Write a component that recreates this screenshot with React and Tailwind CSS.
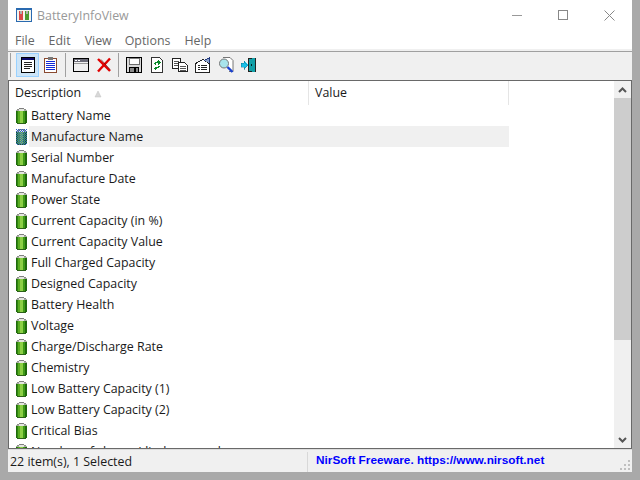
import React from "react";

const font = { fontFamily: "'Open Sans', 'Noto Sans', sans-serif" };

const rows = [
  "Battery Name",
  "Manufacture Name",
  "Serial Number",
  "Manufacture Date",
  "Power State",
  "Current Capacity (in %)",
  "Current Capacity Value",
  "Full Charged Capacity",
  "Designed Capacity",
  "Battery Health",
  "Voltage",
  "Charge/Discharge Rate",
  "Chemistry",
  "Low Battery Capacity (1)",
  "Low Battery Capacity (2)",
  "Critical Bias",
  "Number of charge/discharge cycles",
];

function Battery({ selected }) {
  return (
    <svg width="11" height="16" viewBox="0 0 11 16" shapeRendering="crispEdges" className="shrink-0">
      <defs>
        <pattern id="dither" width="2" height="2" patternUnits="userSpaceOnUse">
          <rect x="0" y="0" width="1" height="1" fill="#2f62c8" />
          <rect x="1" y="1" width="1" height="1" fill="#2f62c8" />
        </pattern>
      </defs>
      <rect x="3" y="0" width="5" height="1" fill="#7f7f7f" />
      <rect x="1" y="1" width="9" height="1" fill="#8d8f8a" />
      <rect x="0" y="2" width="11" height="1" fill="#a9aca5" />
      <rect x="3" y="1" width="5" height="2" fill="#e4e6e0" />
      <rect x="0" y="3" width="11" height="12" fill="#1f6a0c" />
      <rect x="1" y="15" width="9" height="1" fill="#2c6118" />
      <rect x="1" y="3" width="1" height="12" fill="#2f8512" />
      <rect x="2" y="3" width="2" height="12" fill="#5aad22" />
      <rect x="4" y="3" width="3" height="12" fill="#8ccf45" />
      <rect x="7" y="3" width="2" height="12" fill="#3f9a18" />
      {selected && <rect x="0" y="0" width="11" height="16" fill="url(#dither)" />}
    </svg>
  );
}

function Icon({ children }) {
  return (
    <svg width="16" height="16" viewBox="0 0 16 16" shapeRendering="crispEdges">
      {children}
    </svg>
  );
}

const icons = {
  report: (
    <Icon>
      <rect x="1.5" y="0.5" width="13" height="15" fill="#fff" stroke="#000" />
      <rect x="2" y="1" width="12" height="2" fill="#0a0a6a" />
      <path d="M4 5.5h8M4 7.5h8M4 9.5h8M4 11.5h6" stroke="#222" />
    </Icon>
  ),
  clipboard: (
    <Icon>
      <rect x="1.5" y="1.5" width="12" height="14" fill="#fff" stroke="#8a4a30" />
      <rect x="5" y="0" width="5" height="3" fill="#777" />
      <path d="M3 4.5h9M3 6.5h9M3 8.5h9M3 10.5h9M3 12.5h9" stroke="#1428d8" />
    </Icon>
  ),
  win: (
    <Icon>
      <rect x="0.5" y="1.5" width="15" height="13" fill="#f0f0f0" stroke="#000" />
      <rect x="1" y="2" width="14" height="3" fill="#6c6c78" />
      <path d="M2 3.5h2M5 3.5h2" stroke="#fff" />
      <path d="M1 6.5h14" stroke="#999" />
    </Icon>
  ),
  del: (
    <svg width="16" height="16" viewBox="0 0 16 16">
      <path d="M2 2l12 12" stroke="#e00000" strokeWidth="2.4" />
      <path d="M14 1.5L2 14.5" stroke="#e00000" strokeWidth="2.4" />
      <path d="M5 2.5l9 10" stroke="#700000" strokeWidth="0.7" />
    </svg>
  ),
  save: (
    <Icon>
      <rect x="0.5" y="0.5" width="15" height="15" fill="#d8d8d8" stroke="#000" />
      <rect x="3" y="1" width="10" height="6" fill="#fff" stroke="#000" strokeWidth="0.5" />
      <rect x="3.5" y="10.5" width="9" height="5" fill="#8a8a8a" stroke="#000" />
      <rect x="8" y="11" width="2" height="4" fill="#000" />
    </Icon>
  ),
  refresh: (
    <Icon>
      <path d="M2.5 0.5h8l3 3v12h-11z" fill="#fff" stroke="#333" />
      <path d="M5 7c0-2 2-3 4-2.500V3l2.500 2.500L9 8V6.500C7.500 6 6.500 6.500 6.500 8z" fill="#0a8a2a" />
      <path d="M11 9c0 2-2 3-4 2.500V14l-2.500-2.500L7 9v1c1.500.5 2.500 0 2.500-1.500z" fill="#0a8a2a" />
    </Icon>
  ),
  copy: (
    <Icon>
      <rect x="0.5" y="1.5" width="8" height="10" fill="#fff" stroke="#222" />
      <path d="M2 4.500h5M2 6.500h5M2 8.500h5" stroke="#555" />
      <path d="M6.500 5.500h6l3 3v6h-9z" fill="#fff" stroke="#222" />
      <path d="M8 9.500h6M8 11.500h6M8 13.500h6" stroke="#555" />
    </Icon>
  ),
  props: (
    <Icon>
      <path d="M0.500 6.500L8 2.500l6 4v9H0.500z" fill="#fff" stroke="#222" />
      <path d="M3 8.500h2M6 8.500h6M3 10.500h2M6 10.500h6M3 12.500h2M6 12.500h6" stroke="#222" />
      <path d="M9 3.500L14.500 1v5" fill="#8aa0c8" stroke="#223a80" />
    </Icon>
  ),
  find: (
    <svg width="16" height="16" viewBox="0 0 16 16">
      <path d="M5 0.500h7l3 3v11H11" fill="#fff" stroke="#555" strokeWidth="0.8" />
      <circle cx="6" cy="6.500" r="4.500" fill="#a8e4ec" stroke="#777" strokeWidth="1" />
      <path d="M9.500 10l5 5" stroke="#1840d0" strokeWidth="2.400" />
    </svg>
  ),
  exit: (
    <Icon>
      <path d="M7 1h8v14H7z" fill="#222" />
      <path d="M8 2l6-1v14l-6-1z" fill="#12a0a8" />
      <rect x="9.500" y="7" width="1" height="2" fill="#022" />
      <path d="M0 6h3V3.500L7 8l-4 4.500V10H0z" fill="#18c0e8" stroke="#0a5a70" strokeWidth="0.300" />
    </Icon>
  ),
};

function ToolBtn({ icon, active }) {
  return (
    <div
      className={`w-[23px] h-[24px] flex items-center justify-center border ${
        active ? "bg-[#cce4f7] border-[#99d1ff]" : "border-transparent"
      }`}
    >
      {icons[icon]}
    </div>
  );
}

function Sep() {
  return (
    <div className="w-[7px] h-[24px] flex justify-center pr-[1px]">
      <div className="w-px h-full bg-[#a0a0a0]" />
    </div>
  );
}

export default function App() {
  return (
    <div className="w-[640px] h-[480px] bg-[#a9a9a9] px-2 pb-2 overflow-hidden" style={font}>
      <div className="h-[472px] flex flex-col bg-[#f0f0f0] text-[12.4px] leading-none">
        {/* title bar */}
        <div className="h-[30px] bg-white flex items-center pl-2 shrink-0">
          <svg width="16" height="16" viewBox="0 0 16 16" shapeRendering="crispEdges">
            <rect x="0" y="1" width="16" height="14" fill="#2a6ab0" />
            <rect x="1" y="3" width="14" height="11" fill="#f4f4ee" />
            <rect x="3" y="4" width="4" height="9" fill="#d84848" />
            <rect x="4" y="4" width="2" height="3" fill="#b0b0b0" />
            <rect x="9" y="4" width="4" height="9" fill="#4a9a30" />
            <rect x="10" y="4" width="2" height="3" fill="#b0b0b0" />
          </svg>
          <span className="ml-[5px] mt-[2px] text-[#999999]">BatteryInfoView</span>
          <div className="ml-auto flex items-center h-full">
            <div className="w-[46px] flex justify-center">
              <div className="w-[10px] h-px bg-[#999999]" />
            </div>
            <div className="w-[46px] flex justify-center">
              <div className="w-[10px] h-[10px] border border-[#888888]" />
            </div>
            <div className="w-[46px] flex justify-center">
              <svg width="11" height="11" viewBox="0 0 11 11">
                <path d="M0.500 0.500l10 10M10.500 0.500l-10 10" stroke="#888888" fill="none" />
              </svg>
            </div>
          </div>
        </div>
        {/* menu */}
        <div className="h-[19px] bg-white flex items-center pl-[7px] pt-[3px] text-[#666666] shrink-0">
          <span>File</span>
          <span className="ml-[14px]">Edit</span>
          <span className="ml-[14px]">View</span>
          <span className="ml-[13px]">Options</span>
          <span className="ml-[14px]">Help</span>
        </div>
        <div className="h-[3px] border-b border-[#a0a0a0] bg-[#f0f0f0] shrink-0" />
        {/* toolbar */}
        <div className="h-[28px] flex items-center shrink-0 pb-[2px]">
          <div className="w-[8px] h-[24px] flex justify-end pr-[5px]">
            <div className="w-px h-full bg-[#a0a0a0]" />
          </div>
          <ToolBtn icon="report" active />
          <ToolBtn icon="clipboard" />
          <Sep />
          <ToolBtn icon="win" />
          <ToolBtn icon="del" />
          <Sep />
          <ToolBtn icon="save" />
          <ToolBtn icon="refresh" />
          <ToolBtn icon="copy" />
          <ToolBtn icon="props" />
          <ToolBtn icon="find" />
          <ToolBtn icon="exit" />
        </div>
        {/* list */}
        <div className="h-[369px] flex bg-white border border-[#696969] shrink-0 overflow-hidden">
          <div className="flex-1 min-w-0 overflow-hidden text-[#1a1a1a]">
            <div className="h-[24px] flex items-center">
              <div className="w-[300px] h-full flex items-center pl-[6px] border-r border-[#e5e5e5]">
                <span>Description</span>
                <svg width="8" height="8" viewBox="0 0 8 8" className="ml-[13px] mt-[1px]">
                  <path d="M4 1L7 7H1z" fill="#d8d8d8" stroke="#c0c0c0" strokeWidth="0.500" />
                </svg>
              </div>
              <div className="w-[200px] h-full flex items-center pl-[6px] border-r border-[#e5e5e5]">
                Value
              </div>
            </div>
            {rows.map((r, i) => (
              <div key={r} className="h-[21px] flex items-center pl-[7px]">
                <Battery selected={i === 1} />
                <div
                  className={`w-[480px] h-full flex items-center pl-[2px] pt-[2px] ml-[2px] ${
                    i === 1 ? "bg-[#f0f0f0]" : ""
                  }`}
                >
                  <span>{r}</span>
                </div>
              </div>
            ))}
          </div>
          {/* scrollbar */}
          <div className="w-[17px] bg-[#f0f0f0] flex flex-col shrink-0">
            <div className="h-[17px] flex items-center justify-center">
              <svg width="9" height="6" viewBox="0 0 9 6">
                <path d="M1 5l3.500-3.500L8 5" stroke="#555555" strokeWidth="2" fill="none" />
              </svg>
            </div>
            <div className="h-[242px] bg-[#cdcdcd]" />
            <div className="flex-1" />
            <div className="h-[17px] flex items-center justify-center">
              <svg width="9" height="6" viewBox="0 0 9 6">
                <path d="M1 1l3.500 3.500L8 1" stroke="#555555" strokeWidth="2" fill="none" />
              </svg>
            </div>
          </div>
        </div>
        {/* status */}
        <div className="flex-1 flex items-center pt-[1px] border-t border-[#dcdcdc] relative">
          <div className="w-[300px] h-[20px] flex items-center pl-[2px] pt-[1px] text-[#1a1a1a] border-r border-[#d8d8d8]">
            22 item(s), 1 Selected
          </div>
          <span
            className="ml-[8px] pb-[1px] text-[#0000ff] text-[11.8px] font-bold"
            style={{ fontFamily: "'Liberation Sans', sans-serif" }}
          >
            NirSoft Freeware. https://www.nirsoft.net
          </span>
          <svg width="10" height="10" viewBox="0 0 10 10" shapeRendering="crispEdges" className="absolute right-[2px] bottom-[2px]">
            <path d="M8 0h2v2H8zM4 4h2v2H4zM8 4h2v2H8zM0 8h2v2H0zM4 8h2v2H4zM8 8h2v2H8z" fill="#c0c0c0" />
          </svg>
        </div>
      </div>
    </div>
  );
}
